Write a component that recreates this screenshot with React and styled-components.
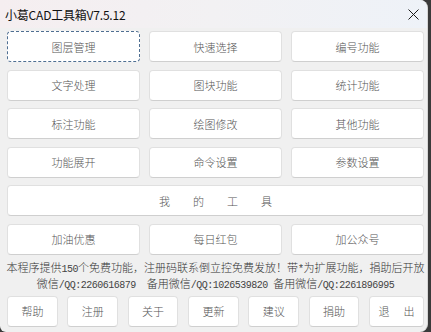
import React from 'react';
import styled, { createGlobalStyle } from 'styled-components';

const GlobalStyle = createGlobalStyle`
    html, body {
        margin: 0;
        padding: 0;
        background: #3a3a3a;
    }
    body {
        font-family: "Noto Sans CJK SC", "Liberation Sans", sans-serif;
    }
`;

const Window = styled.div`
    width: 428px;
    height: 332px;
    box-sizing: border-box;
    background: #f0f0f0;
    border-right: 1px solid #d6d6d6;
    border-radius: 0 8px 8px 6px;
    overflow: hidden;
    display: flex;
    flex-direction: column;
`;

const TitleBar = styled.div`
    height: 28px;
    flex: none;
    display: flex;
    align-items: center;
    justify-content: space-between;
    padding: 0 8px 0 5px;
    background: linear-gradient(90deg, #f5eef0 0%, #f2f1f3 50%, #eef2f8 100%);
`;

const Title = styled.div`
    font-size: 12px;
    color: #111;
    letter-spacing: -0.2px;
`;

const Close = styled.div`
    width: 12px;
    height: 12px;
    display: flex;
    align-items: center;
    justify-content: center;
`;

const Body = styled.div`
    flex: 1;
    display: flex;
    flex-direction: column;
    padding: 3px 3px 0 7px;
`;

const Grid = styled.div`
    display: grid;
    grid-template-columns: repeat(3, 1fr);
    column-gap: 9px;
    row-gap: 7.5px;
`;

const Button = styled.div`
    height: 31px;
    box-sizing: border-box;
    display: flex;
    align-items: center;
    justify-content: center;
    gap: ${p => p.$gap || 0}px;
    background: #fff;
    border: 1px ${p => (p.$focused ? 'dashed #4f6f92' : 'solid #e0e0e0')};
    border-bottom-color: ${p => (p.$focused ? '#4f6f92' : '#cfcfcf')};
    border-radius: 4px;
    font-size: 11px;
    font-weight: 300;
    color: #555;
    white-space: nowrap;
    grid-column: ${p => (p.$wide ? '1 / -1' : 'auto')};
`;

const Notice = styled.div`
    margin: 4px -3px 0 -3px;
    font-size: 11px;
    font-weight: 300;
    color: #333;
    text-align: center;
    white-space: nowrap;
`;

const NoticeLine = styled.div`
    height: 16px;
    line-height: 16px;
`;

const Ascii = styled.span`
    font-family: "Liberation Mono", monospace;
    font-size: 10px;
    letter-spacing: -0.5px;
    color: #444;
    line-height: 0;
`;

const BottomBar = styled.div`
    margin-top: 5px;
    display: grid;
    grid-template-columns: repeat(6, 1fr) 55px;
    column-gap: 9.5px;
`;

const mainButtons = [
    '图层管理', '快速选择', '编号功能',
    '文字处理', '图块功能', '统计功能',
    '标注功能', '绘图修改', '其他功能',
    '功能展开', '命令设置', '参数设置',
];

const extraButtons = ['加油优惠', '每日红包', '加公众号'];

const bottomButtons = ['帮助', '注册', '关于', '更新', '建议', '捐助'];

const Spread = ({label, gap, wide}) => (
    <Button $gap={gap} $wide={wide}>
        {label.split('').map((ch, i) => <span key={i}>{ch}</span>)}
    </Button>
);

const App = () => (
    <>
        <GlobalStyle />
        <Window>
            <TitleBar>
                <Title>小葛CAD工具箱V7.5.12</Title>
                <Close>
                    <svg width="11" height="11" viewBox="0 0 11 11">
                        <path d="M0.5 0.5 L10.5 10.5 M10.5 0.5 L0.5 10.5" stroke="#1a1a1a" strokeWidth="1" fill="none" />
                    </svg>
                </Close>
            </TitleBar>
            <Body>
                <Grid>
                    {mainButtons.map((label, i) => (
                        <Button key={label} $focused={i === 0}>{label}</Button>
                    ))}
                    <Spread label="我的工具" gap={23} wide />
                    {extraButtons.map(label => (
                        <Button key={label}>{label}</Button>
                    ))}
                </Grid>
                <Notice>
                    <NoticeLine>
                        本程序提供<Ascii>150</Ascii>个免费功能，注册码联系倒立控免费发放！带<Ascii>*</Ascii>为扩展功能，捐助后开放
                    </NoticeLine>
                    <NoticeLine>
                        微信<Ascii>/QQ:2260616879&nbsp;&nbsp;</Ascii>备用微信<Ascii>/QQ:1026539820&nbsp;</Ascii>备用微信<Ascii>/QQ:2261896995</Ascii>
                    </NoticeLine>
                </Notice>
                <BottomBar>
                    {bottomButtons.map(label => (
                        <Button key={label}>{label}</Button>
                    ))}
                    <Spread label="退出" gap={14} />
                </BottomBar>
            </Body>
        </Window>
    </>
);

export default App;
